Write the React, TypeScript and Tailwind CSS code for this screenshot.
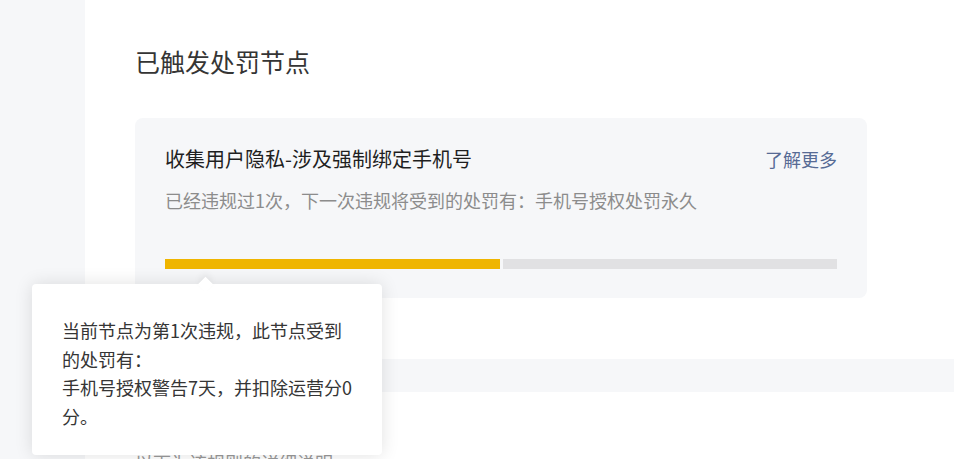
import React from 'react'

const font = { fontFamily: '"Noto Sans CJK SC", "Noto Sans", sans-serif' }

export default function App() {
  return (
    <div className="relative flex h-[459px] w-[954px] overflow-hidden bg-white" style={font}>
      <div className="w-[85px] shrink-0 bg-[#f6f7f9]" />

      <div className="flex-1 bg-white">
        <div className="px-[50px] pt-[43px] pb-[61px]">
          <h2 className="text-[25px] leading-[36px] text-[#353535]">已触发处罚节点</h2>

          <div className="mt-[39px] w-[732px] rounded-[8px] bg-[#f6f7f9] px-[30px] pt-[27px] pb-[29px]">
            <div className="flex items-center justify-between">
              <span className="text-[20px] leading-[28px] text-[#1f1f1f]">收集用户隐私-涉及强制绑定手机号</span>
              <a className="text-[18px] leading-[28px] text-[#576b95]">了解更多</a>
            </div>
            <p className="mt-[13px] text-[18px] leading-[28px] text-[#8c8c8c]">
              已经违规过1次，下一次违规将受到的处罚有：手机号授权处罚永久
            </p>
            <div className="mt-[45px] flex h-[10px] gap-[3px]">
              <div className="flex-1 bg-[#efb500]" />
              <div className="flex-1 bg-[#e1e1e3]" />
            </div>
          </div>
        </div>

        <div className="h-[33px] bg-[#f6f7f9]" />

        <div className="px-[50px] pt-[56px]">
          <p className="text-[18px] leading-[28px] text-[#9a9a9a]">以下为该规则的详细说明</p>
        </div>
      </div>

      {/* tooltip */}
      <div className="absolute left-[32px] top-[284px] h-[171px] w-[350px] rounded-[4px] bg-white px-[30px] pt-[32px] shadow-[0_0_18px_rgba(0,0,0,0.12)]">
        <div className="absolute left-[168px] top-[-5px] h-[11px] w-[11px] rotate-45 bg-white shadow-[-3px_-3px_6px_rgba(0,0,0,0.05)]" />
        <div className="relative whitespace-nowrap text-[18px] leading-[28.5px] text-[#353535]">
          <div>当前节点为第1次违规，此节点受到</div>
          <div>的处罚有：</div>
          <div>手机号授权警告7天，并扣除运营分0</div>
          <div>分。</div>
        </div>
      </div>
    </div>
  )
}
